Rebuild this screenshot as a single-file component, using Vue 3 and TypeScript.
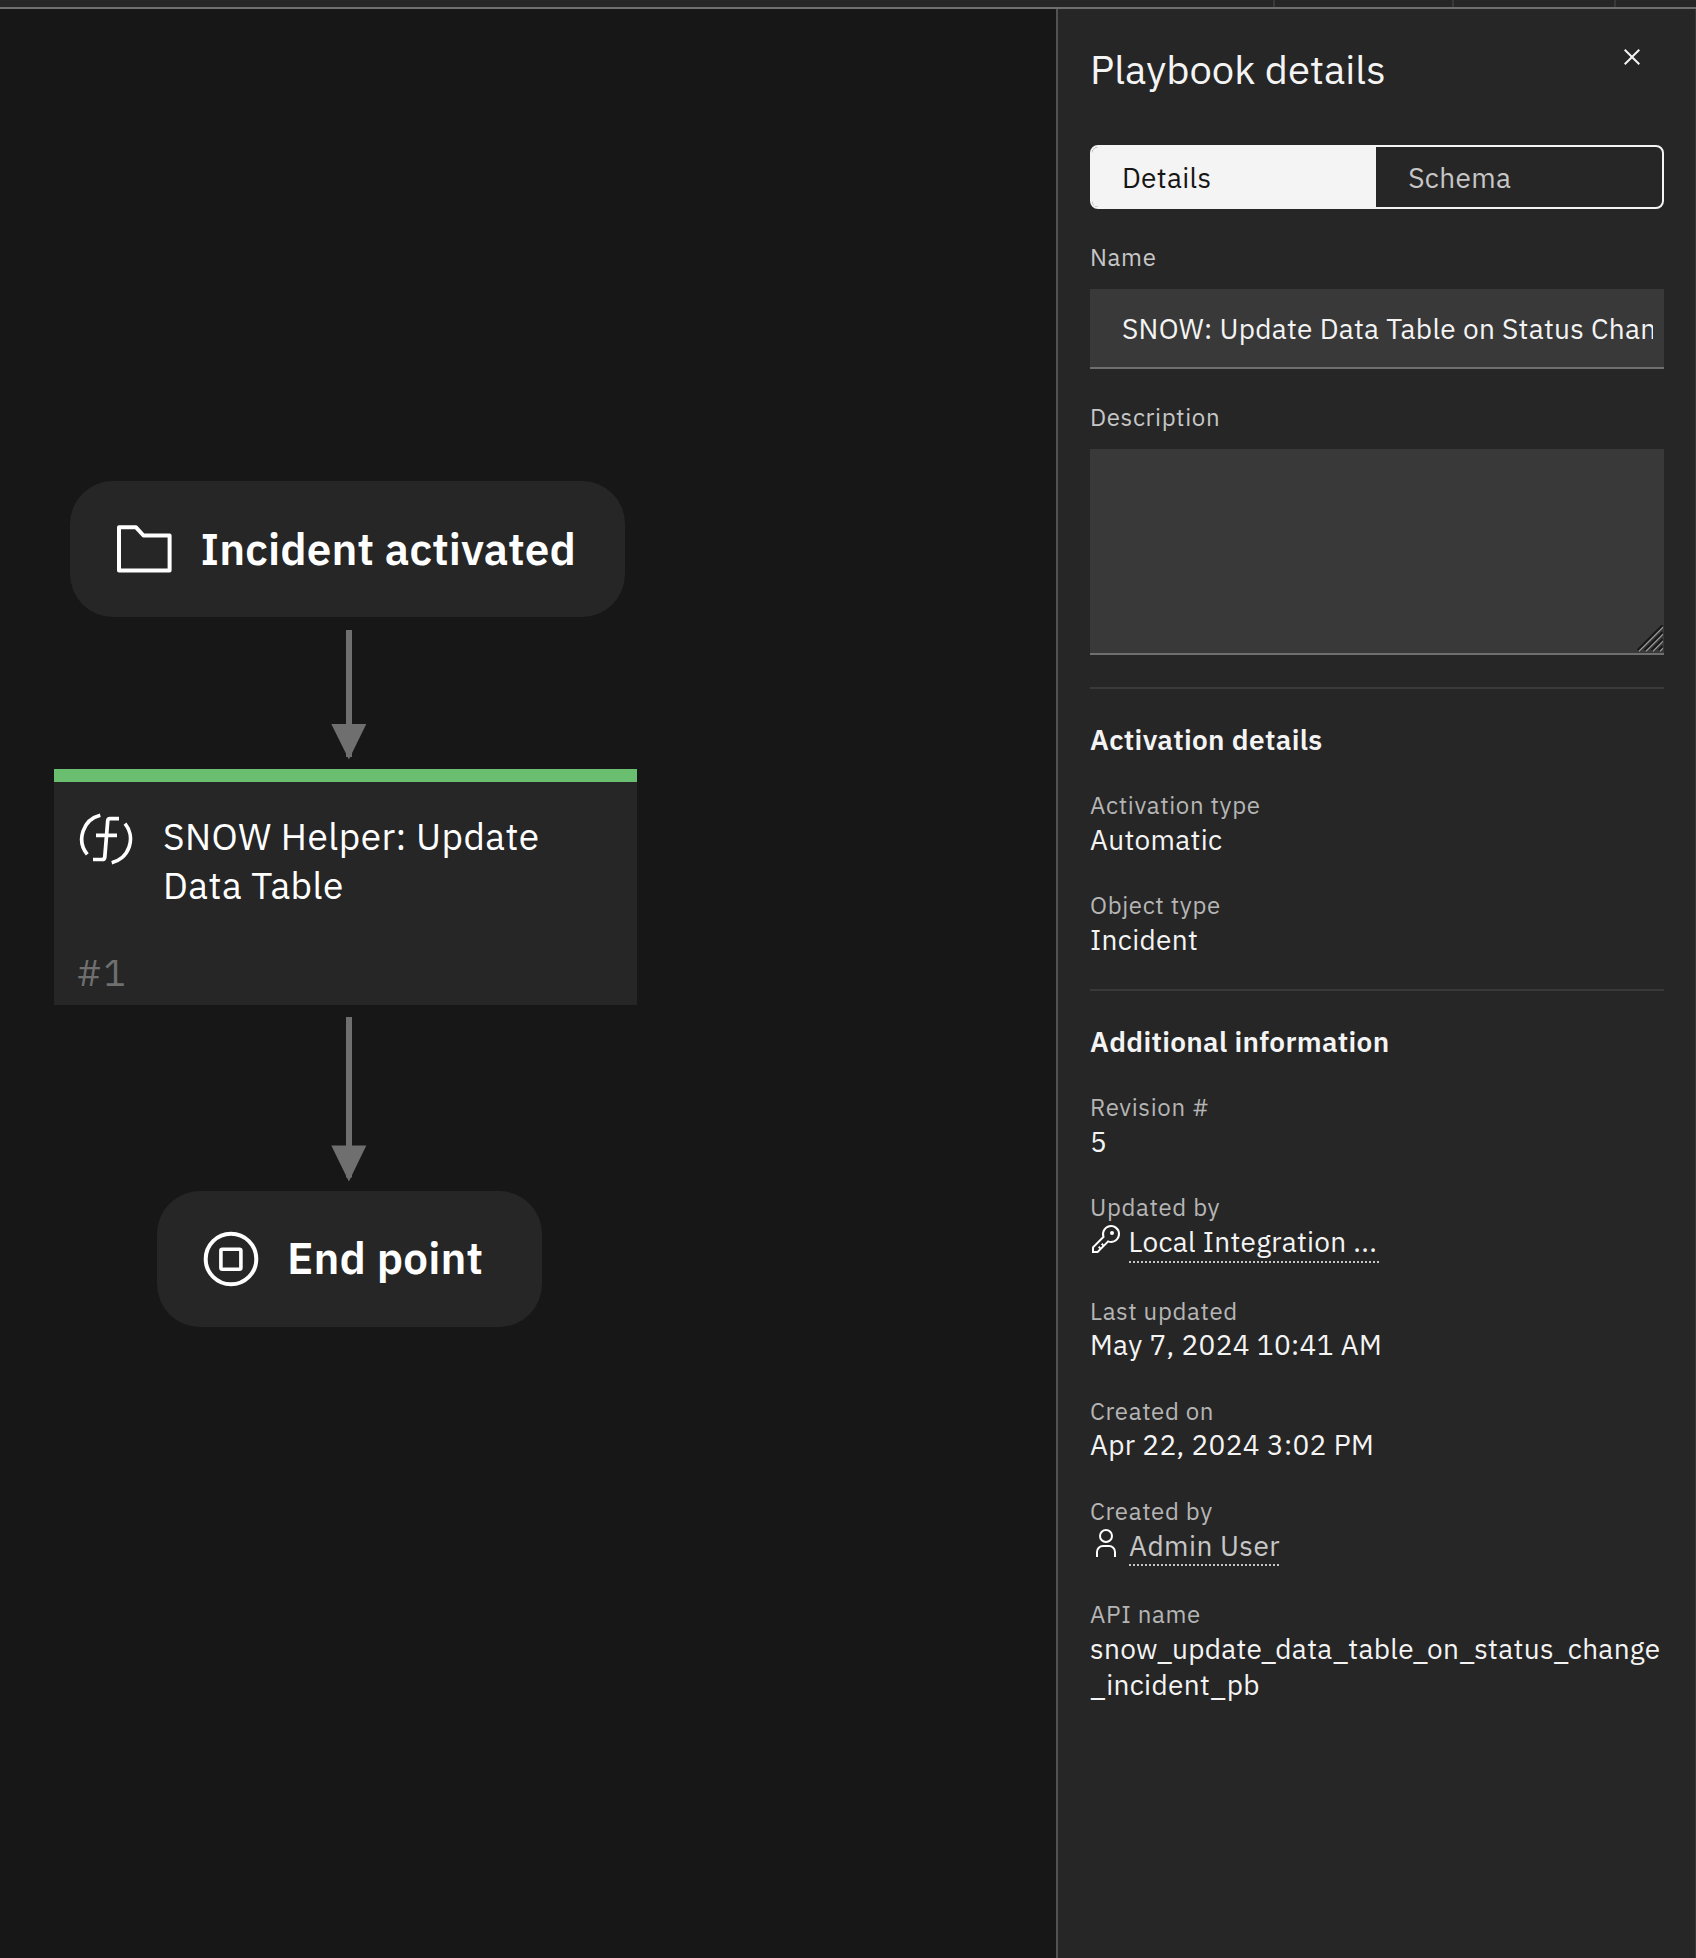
<script setup lang="ts">
import { ref } from 'vue'

interface Field {
  label: string
  value: string
  icon?: 'key' | 'user'
  date?: boolean
}

const tabs = ['Details', 'Schema']
const activeTab = ref('Details')

const activation: Field[] = [
  { label: 'Activation type', value: 'Automatic' },
  { label: 'Object type', value: 'Incident' },
]

const additional: Field[] = [
  { label: 'Revision #', value: '5' },
  { label: 'Updated by', value: 'Local Integration ...', icon: 'key' },
  { label: 'Last updated', value: 'May 7, 2024 10:41 AM', date: true },
  { label: 'Created on', value: 'Apr 22, 2024 3:02 PM', date: true },
  { label: 'Created by', value: 'Admin User', icon: 'user' },
  { label: 'API name', value: 'snow_update_data_table_on_status_change_incident_pb' },
]
</script>

<template>
  <div class="app">
    <header class="toolbar">
      <span class="cell first"></span>
      <span class="cell second"></span>
      <span class="cell third"></span>
    </header>

    <div class="workspace">
      <main class="canvas">
        <svg class="edges" width="700" height="1300" viewBox="0 0 700 1300">
          <g fill="#6f6f6f">
            <path d="M346 621h6v127h-6zM331.3 715h35L348.9 750.5z" />
            <path d="M346 1008h6v160.500h-6zM331.300 1136.500h35L348.900 1172.500z" />
          </g>
        </svg>

        <div class="node pill start">
          <svg class="pill-icon" width="60" height="60" viewBox="0 0 60 60" fill="none" stroke="#fff" stroke-width="4" stroke-linejoin="round">
            <path d="M5 8.300H22L29.500 16.500H55.600V51.600H5Z" />
          </svg>
          <span>Incident activated</span>
        </div>

        <div class="node task">
          <div class="task-main">
            <svg class="task-icon" width="56" height="56" viewBox="78 811 56 56" fill="none" stroke="#fff" stroke-width="3.700">
              <path d="M100.300 815.300A24.300 24.300 0 0 0 87.300 854.300M125 823.700A24.300 24.300 0 0 1 111.700 862.700M119 818.700H110Q107.900 818.700 107.700 821L104.800 857Q104.600 859.500 102 859.500H93M96 835.300H117" />
            </svg>
            <span class="task-title">SNOW Helper: Update Data Table</span>
          </div>
          <span class="task-number">#1</span>
        </div>

        <div class="node pill end">
          <svg class="pill-icon" width="60" height="60" viewBox="0 0 60 60" fill="none" stroke="#fff">
            <circle cx="30" cy="30" r="25.300" stroke-width="4" />
            <rect x="19.900" y="20.200" width="20" height="20" rx="1.500" stroke-width="3.600" />
          </svg>
          <span>End point</span>
        </div>
      </main>

      <aside class="panel">
        <div class="panel-head">
          <h1>Playbook details</h1>
          <svg class="close" width="32" height="32" viewBox="0 0 32 32" fill="#f4f4f4">
            <path d="M24 9.400 22.600 8 16 14.600 9.400 8 8 9.400 14.600 16 8 22.600 9.400 24 16 17.400 22.600 24 24 22.600 17.400 16z" />
          </svg>
        </div>

        <div class="tabs">
          <button
            v-for="tab in tabs"
            :key="tab"
            type="button"
            :class="['tab', { active: tab === activeTab }]"
            @click="activeTab = tab"
          >{{ tab }}</button>
        </div>

        <div class="form-item">
          <div class="label">Name</div>
          <div class="text-input"><div class="clip">SNOW: Update Data Table on Status Change</div></div>
        </div>

        <div class="form-item">
          <div class="label">Description</div>
          <div class="text-area">
            <svg width="26" height="27" viewBox="0 0 26 27" fill="none">
              <path d="M1 26 26 1M8 26 26 8M15 26 26 15M22 26 26 22" stroke="#161616" stroke-width="2" transform="translate(-.4 -.9)" />
              <path d="M1 26 26 1M8 26 26 8M15 26 26 15M22 26 26 22" stroke="#a0a0a0" stroke-width="1.100" transform="translate(.9 .4)" />
            </svg>
          </div>
        </div>

        <section>
          <h2>Activation details</h2>
          <div v-for="f in activation" :key="f.label" class="field">
            <div class="label">{{ f.label }}</div>
            <div class="value plain">{{ f.value }}</div>
          </div>
        </section>

        <section>
          <h2>Additional information</h2>
          <div v-for="f in additional" :key="f.label" class="field">
            <div class="label">{{ f.label }}</div>
            <div v-if="f.icon" :class="['value', 'principal', f.icon]">
              <svg v-if="f.icon === 'key'" width="32" height="32" viewBox="0 0 32 32" fill="#fff">
                <path d="M21 2a8.998 8.998 0 0 0-8.612 11.612L2 24v6h6l10.388-10.388A9 9 0 1 0 21 2Zm0 16a7.013 7.013 0 0 1-2.032-.302l-1.147-.348-.847.847-3.181 3.181L12.414 20 11 21.414l1.379 1.379-1.586 1.586L9.414 23 8 24.414l1.379 1.379L7.172 28H4v-3.172l9.802-9.802.848-.847-.348-1.147A7 7 0 1 1 21 18Z" />
                <circle cx="22" cy="10" r="2" />
              </svg>
              <svg v-else width="32" height="32" viewBox="0 0 32 32" fill="#fff">
                <path d="M16 4a5 5 0 1 1-5 5 5 5 0 0 1 5-5m0-2a7 7 0 1 0 7 7 7 7 0 0 0-7-7zM26 30h-2v-5a5 5 0 0 0-5-5h-6a5 5 0 0 0-5 5v5H6v-5a7 7 0 0 1 7-7h6a7 7 0 0 1 7 7z" />
              </svg>
              <span class="dotted">{{ f.value }}</span>
            </div>
            <div v-else :class="['value', { plain: !f.date }]">{{ f.value }}</div>
          </div>
        </section>
      </aside>
    </div>
  </div>
</template>

<style>
body {
  background: #171717;
}
</style>

<style scoped>
* {
  box-sizing: border-box;
}

.app {
  display: flex;
  flex-direction: column;
  width: 1696px;
  height: 1958px;
  overflow: hidden;
  background: #171717;
  color: #f4f4f4;
  font-family: 'IBM Plex Sans', Roboto, 'Noto Sans', sans-serif;
}

.toolbar {
  display: flex;
  flex: none;
  height: 9px;
  background: #262626;
  border-bottom: 2px solid #6f6f6f;
}

.cell {
  border-right: 2px solid #393939;
}

.first {
  width: 1275px;
}

.second {
  width: 179px;
}

.third {
  width: 162px;
}

.workspace {
  display: flex;
  flex: 1;
  min-height: 0;
}

.canvas {
  position: relative;
  flex: 1;
  color: #fff;
}

.edges {
  position: absolute;
  left: 0;
  top: 0;
}

.node {
  position: absolute;
  background: #262626;
}

.pill {
  display: flex;
  align-items: center;
  height: 136px;
  border-radius: 43px;
  font-size: 44px;
  font-weight: 600;
  letter-spacing: 0.15px;
  line-height: 58px;
  white-space: nowrap;
}

.pill-icon {
  flex: none;
}

.start {
  left: 70px;
  top: 472px;
  width: 555px;
  padding-left: 44px;
}

.start span {
  margin-left: 26.5px;
}

.end {
  left: 157px;
  top: 1182px;
  width: 385px;
  padding-left: 44px;
}

.end span {
  margin-left: 26px;
  padding-bottom: 2px;
}

.task {
  display: flex;
  flex-direction: column;
  justify-content: space-between;
  left: 54px;
  top: 760px;
  width: 583px;
  height: 236px;
  padding: 29px 22px 8px;
  border-top: 13px solid #69be70;
  font-size: 37px;
  line-height: 49px;
  letter-spacing: 0.46px;
}

.task-main {
  display: flex;
  gap: 29px;
}

.task-icon {
  flex: none;
  margin-left: 2px;
}

.task-title {
  width: 400px;
  padding-top: 1px;
}

.task-number {
  color: #6f6f6f;
  letter-spacing: 1px;
}

.panel {
  flex: none;
  width: 640px;
  padding: 35px 31px 0 32px;
  background: #262626;
  border-left: 2px solid #525252;
  border-right: 1px solid #393939;
}

.panel-head {
  display: flex;
  justify-content: space-between;
  height: 101px;
}

h1 {
  margin: 0;
  font-size: 40px;
  font-weight: 400;
  line-height: 50px;
}

.close {
  margin: -3px 16px 0 0;
}

.tabs {
  display: flex;
  height: 64px;
  border: 2px solid #f4f4f4;
  border-radius: 8px;
  overflow: hidden;
}

.tab {
  flex: 1;
  padding: 2px 0 0 32.5px;
  border: 0;
  background: transparent;
  color: #c6c6c6;
  font: 400 28px/36px 'IBM Plex Sans', Roboto, 'Noto Sans', sans-serif;
  letter-spacing: 0.32px;
  text-align: left;
}

.tab.active {
  padding-left: 30px;
  background: #f4f4f4;
  color: #161616;
}

.form-item {
  margin-top: 32px;
}

.label {
  color: #c6c6c6;
  font-size: 24px;
  line-height: 32px;
  letter-spacing: 0.64px;
}

.form-item .label {
  margin-bottom: 16px;
}

.text-input {
  height: 80px;
  padding: 1px 11px 0 32px;
  background: #393939;
  border-bottom: 2px solid #6f6f6f;
  font-size: 28px;
  line-height: 78px;
  letter-spacing: 0.3px;
}

.clip {
  overflow: hidden;
  white-space: nowrap;
}

.text-area {
  display: flex;
  align-items: flex-end;
  justify-content: flex-end;
  height: 206px;
  padding: 0 1px 1px 0;
  background: #393939;
  border-bottom: 2px solid #6f6f6f;
}

section {
  margin-top: 32px;
  padding-top: 32px;
  border-top: 2px solid #393939;
}

h2 {
  margin: 0 0 -1px;
  padding-top: 1px;
  font-size: 28px;
  font-weight: 600;
  line-height: 36px;
  letter-spacing: 0.32px;
}

.field {
  margin-top: 32px;
}

.field .label {
  color: #b5b5b5;
}

.value {
  font-size: 28px;
  line-height: 36px;
  letter-spacing: 0.32px;
  overflow-wrap: anywhere;
}

.plain {
  height: auto;
  padding-top: 1px;
  margin-bottom: -1px;
}

.principal {
  display: flex;
  align-items: flex-start;
  gap: 6.5px;
  height: 40px;
}

.principal.user {
  height: 39px;
  gap: 7px;
  letter-spacing: 0.46px;
}

.dotted {
  height: 100%;
  padding-top: 1px;
  background: repeating-linear-gradient(90deg, #c6c6c6 0 2px, transparent 2px 4px) left bottom / 100% 2px no-repeat;
}

.key .dotted {
  min-width: 250px;
  letter-spacing: 0.28px;
}

.user .dotted {
  color: #c6c6c6;
}
</style>
